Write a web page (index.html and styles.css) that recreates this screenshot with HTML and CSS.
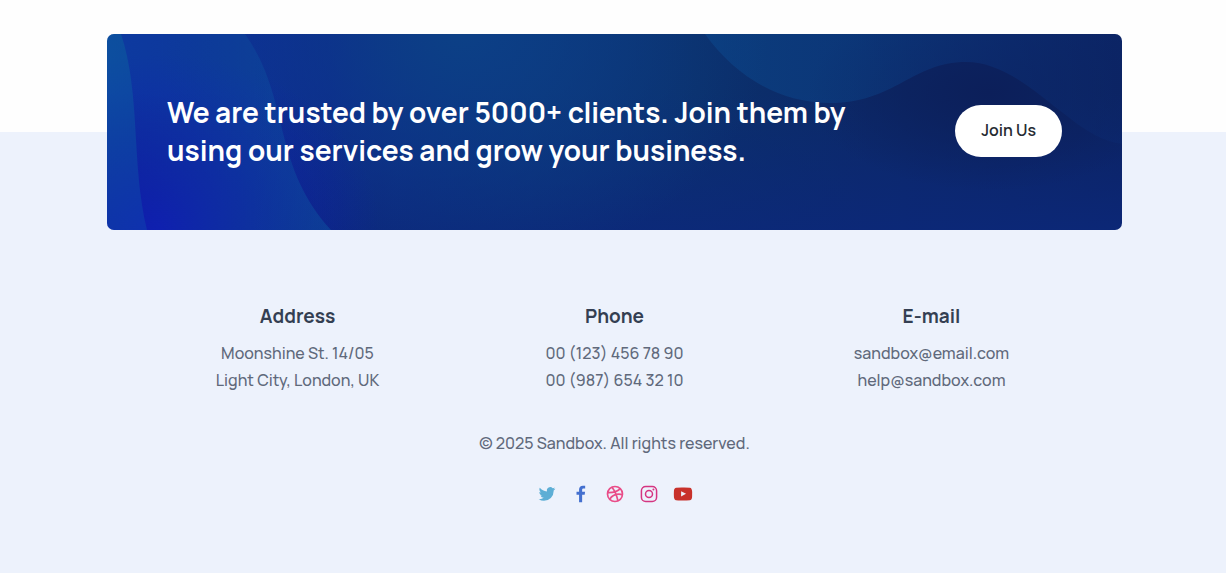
FILE: index.html
```html
<!DOCTYPE html>
<html lang="en">
<head>
<meta charset="utf-8">
<meta name="viewport" content="width=device-width, initial-scale=1">
<title>Sandbox</title>
<link rel="stylesheet" href="styles.css">
</head>
<body>
<footer class="footer">
  <section class="cta">
    <svg class="cta-waves" viewBox="0 0 1015 196" preserveAspectRatio="none" aria-hidden="true">
      <defs>
        <linearGradient id="wave-left" x1="0" y1="0" x2="0" y2="1">
          <stop offset="0" stop-color="#0b6a9c" stop-opacity=".42"/>
          <stop offset="1" stop-color="#0e6ab0" stop-opacity=".28"/>
        </linearGradient>
        <linearGradient id="wave-mid" x1="0" y1="0" x2="1" y2="0">
          <stop offset="0" stop-color="#0d63a8" stop-opacity="0"/>
          <stop offset="1" stop-color="#0d63a8" stop-opacity=".38"/>
        </linearGradient>
        <linearGradient id="wave-right" x1="0" y1="0" x2="1" y2="0">
          <stop offset="0" stop-color="#0b56a0" stop-opacity=".34"/>
          <stop offset=".35" stop-color="#0b4f98" stop-opacity=".34"/>
          <stop offset=".7" stop-color="#0c3a88" stop-opacity=".32"/>
          <stop offset="1" stop-color="#0c307c" stop-opacity=".2"/>
        </linearGradient>
      </defs>
      <path fill="url(#wave-left)" d="M0 0H14C34 60 24 130 40 196H0Z"/>
      <path fill="url(#wave-mid)" d="M14 0H138C184 65 164 130 224 196H40C24 130 34 60 14 0Z"/>
      <path fill="url(#wave-right)" d="M598 0C628 42 672 69 723 69C788 69 805 28 859 28C919 28 965 105 1015 110V0Z"/>
    </svg>
    <h2 class="cta-title">We are trusted by over 5000+ clients. Join them by using our services and grow your business.</h2>
    <a class="cta-button" href="#join">Join Us</a>
  </section>

  <div class="contacts">
    <section class="contact">
      <h3 class="contact-title">Address</h3>
      <address class="contact-text">Moonshine St. 14/05<br>Light City, London, UK</address>
    </section>
    <section class="contact">
      <h3 class="contact-title">Phone</h3>
      <p class="contact-text">00 (123) 456 78 90<br>00 (987) 654 32 10</p>
    </section>
    <section class="contact">
      <h3 class="contact-title">E-mail</h3>
      <p class="contact-text"><a href="mailto:sandbox@email.com">sandbox@email.com</a><br><a href="mailto:help@sandbox.com">help@sandbox.com</a></p>
    </section>
  </div>

  <p class="copyright">© 2025 Sandbox. All rights reserved.</p>

  <nav class="social" aria-label="Social media">
    <a class="twitter" href="#twitter" aria-label="Twitter"><svg viewBox="0 0 24 24" fill="currentColor"><path d="M22,5.8a8.49,8.49,0,0,1-2.36.64,4.13,4.13,0,0,0,1.81-2.27,8.21,8.21,0,0,1-2.61,1,4.1,4.1,0,0,0-7,3.74A11.64,11.64,0,0,1,3.39,4.62a4.16,4.16,0,0,0-.55,2.07A4.09,4.09,0,0,0,4.66,10.1,4.05,4.05,0,0,1,2.8,9.59v.05a4.1,4.1,0,0,0,3.3,4A3.93,3.93,0,0,1,5,13.81a4.9,4.9,0,0,1-.77-.07,4.11,4.11,0,0,0,3.83,2.84A8.22,8.22,0,0,1,3,18.34a7.93,7.93,0,0,1-1-.06,11.57,11.57,0,0,0,6.29,1.85A11.59,11.59,0,0,0,20,8.45c0-.17,0-.35,0-.53A8.43,8.43,0,0,0,22,5.8Z"/></svg></a>
    <a class="facebook" href="#facebook" aria-label="Facebook"><svg viewBox="0 0 24 24" fill="currentColor"><path d="M15.12,5.32H17V2.14A26.11,26.11,0,0,0,14.26,2C11.54,2,9.68,3.66,9.68,6.7V9.32H6.61v3.56H9.68V22h3.68V12.88h3.06l.46-3.56H13.36V7.05C13.36,6,13.64,5.32,15.12,5.32Z"/></svg></a>
    <a class="dribbble" href="#dribbble" aria-label="Dribbble"><svg viewBox="0 0 24 24" fill="none" stroke="currentColor" stroke-width="2"><circle cx="12" cy="12" r="9"/><path d="M8.4 3.8C11.8 8.2 14.2 13.6 15.5 20.3M3.1 10.3C9 10.5 14.9 9.4 18.5 5.6M5.6 18.4C8.7 13.2 14.5 11.4 21 12.7"/></svg></a>
    <a class="instagram" href="#instagram" aria-label="Instagram"><svg viewBox="0 0 24 24" fill="none" stroke="currentColor" stroke-width="1.8"><rect x="2.9" y="2.9" width="18.2" height="18.2" rx="5.2"/><circle cx="12" cy="12" r="4.2"/><circle cx="17.3" cy="6.7" r="1.2" fill="currentColor" stroke="none"/></svg></a>
    <a class="youtube" href="#youtube" aria-label="YouTube"><svg viewBox="0 0 24 24" fill="currentColor"><path d="M23,9.71a8.5,8.5,0,0,0-.91-4.13,2.92,2.92,0,0,0-1.72-1A78.36,78.36,0,0,0,12,4.27a78.45,78.45,0,0,0-8.34.3,2.87,2.87,0,0,0-1.46.74c-.9.83-1,2.25-1.1,3.45a48.29,48.29,0,0,0,0,6.48,9.55,9.55,0,0,0,.3,2,3.14,3.14,0,0,0,.71,1.36,2.86,2.86,0,0,0,1.49.78,45.18,45.18,0,0,0,6.5.33c3.5.05,6.57,0,10.2-.28a2.88,2.88,0,0,0,1.53-.78,2.49,2.49,0,0,0,.61-1,10.58,10.58,0,0,0,.52-3.4C23,13.69,23,10.31,23,9.71ZM9.74,14.85V8.66l5.92,3.11C14,12.69,11.81,13.73,9.74,14.85Z"/></svg></a>
  </nav>
</footer>
</body>
</html>
```

FILE: styles.css
```css
* {
  box-sizing: border-box;
}

body {
  margin: 0;
  background: #edf2fc;
  color: #60697b;
  font-family: Manrope, Inter, "Liberation Sans", sans-serif;
  font-size: 16px;
  font-weight: 500;
  line-height: 27px;
}

h2,
h3,
p {
  margin: 0;
}

a {
  color: inherit;
  text-decoration: none;
}

.footer {
  padding: 34px 104px 67px 107px;
  background: linear-gradient(#fefefe 132px, #edf2fc 132px);
  text-align: center;
}

.cta {
  position: relative;
  display: flex;
  align-items: center;
  justify-content: space-between;
  gap: 60px;
  min-height: 196px;
  padding: 58px 60px 60px;
  overflow: hidden;
  border-radius: 7px;
  background:
    radial-gradient(ellipse 22% 90% at 5% 100%, #0f1bb0, rgba(15, 27, 176, 0) 100%),
    radial-gradient(ellipse 30% 120% at 35% 0%, #0c4086, rgba(12, 64, 134, 0) 100%),
    radial-gradient(ellipse 18% 50% at 87% 30%, #0c1f5a, rgba(12, 31, 90, 0) 100%),
    linear-gradient(rgba(12, 40, 124, 0) 30%, rgba(12, 40, 122, .85) 100%),
    linear-gradient(90deg, #0d3ba0 0%, #0d2492 22%, #0b327a 42%, #0b306c 58%, #0c2967 75%, #0c2260 100%);
}

.cta-waves {
  position: absolute;
  inset: 0;
  width: 100%;
  height: 100%;
}

.cta-title {
  position: relative;
  max-width: 720px;
  color: #fff;
  font-size: 28px;
  font-weight: 700;
  line-height: 38px;
  text-align: left;
}

.cta-button {
  position: relative;
  flex: none;
  padding: 12px 26px 13px;
  border-radius: 26px;
  background: #fff;
  color: #262b32;
  font-weight: 600;
}

.contacts {
  display: grid;
  grid-template-columns: repeat(3, 1fr);
  padding: 73px 32px 0;
}

.contact-title {
  margin-bottom: 10px;
  color: #343f52;
  font-size: 19px;
  font-weight: 700;
}

.contact-text {
  font-style: normal;
}

.copyright {
  margin-top: 36px;
}

.social {
  display: flex;
  justify-content: center;
  gap: 14px;
  margin-top: 27px;
}

.social a,
.social svg {
  display: block;
  width: 20px;
  height: 20px;
}

.twitter {
  color: #5daed5;
}

.facebook {
  color: #4470cf;
}

.dribbble {
  color: #e94d88;
}

.instagram {
  color: #d53581;
}

.youtube {
  color: #c8312b;
}
```
